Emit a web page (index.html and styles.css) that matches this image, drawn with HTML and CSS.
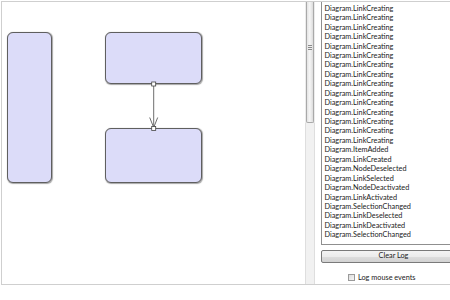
FILE: index.html
```html
<!DOCTYPE html>
<html>
<head>
<meta charset="utf-8">
<link rel="stylesheet" href="styles.css">
</head>
<body>
<div class="frame">
  <div class="diagram">
    <div class="node node-a"></div>
    <div class="node node-b"></div>
    <div class="node node-c"></div>
    <svg class="links" width="303" height="282" viewBox="0 0 303 282">
      <line x1="151.7" y1="84" x2="151.7" y2="126.5" stroke="#6e6e6e" stroke-width="1"/>
      <polyline points="147.7,115.5 151.7,125.5 155.7,115.5" fill="none" stroke="#6e6e6e" stroke-width="1"/>
      <rect x="149.7" y="80" width="4" height="4" fill="#fff" stroke="#444" stroke-width="0.8"/>
      <rect x="149.7" y="124.5" width="4" height="4" fill="#fff" stroke="#444" stroke-width="0.8"/>
    </svg>
  </div>
  <div class="scrollbar">
    <div class="thumb"><span class="grip"></span></div>
    <div class="track"></div>
  </div>
  <div class="panel">
    <div class="log">
      <div class="item">Diagram.LinkCreating</div>
      <div class="item">Diagram.LinkCreating</div>
      <div class="item">Diagram.LinkCreating</div>
      <div class="item">Diagram.LinkCreating</div>
      <div class="item">Diagram.LinkCreating</div>
      <div class="item">Diagram.LinkCreating</div>
      <div class="item">Diagram.LinkCreating</div>
      <div class="item">Diagram.LinkCreating</div>
      <div class="item">Diagram.LinkCreating</div>
      <div class="item">Diagram.LinkCreating</div>
      <div class="item">Diagram.LinkCreating</div>
      <div class="item">Diagram.LinkCreating</div>
      <div class="item">Diagram.LinkCreating</div>
      <div class="item">Diagram.LinkCreating</div>
      <div class="item">Diagram.LinkCreating</div>
      <div class="item">Diagram.LinkCreating</div>
      <div class="item">Diagram.ItemAdded</div>
      <div class="item">Diagram.LinkCreated</div>
      <div class="item">Diagram.NodeDeselected</div>
      <div class="item">Diagram.LinkSelected</div>
      <div class="item">Diagram.NodeDeactivated</div>
      <div class="item">Diagram.LinkActivated</div>
      <div class="item">Diagram.SelectionChanged</div>
      <div class="item">Diagram.LinkDeselected</div>
      <div class="item">Diagram.LinkDeactivated</div>
      <div class="item">Diagram.SelectionChanged</div>
    </div>
    <div class="button">Clear Log</div>
    <label class="check">
      <span class="box"></span>
      <span class="label">Log mouse events</span>
    </label>
  </div>
</div>
</body>
</html>
```
FILE: styles.css
```css
html, body {
  margin: 0;
  padding: 0;
  background: #ffffff;
}
body {
  width: 450px;
  height: 300px;
  overflow: hidden;
  font-family: "Lato", "Open Sans", sans-serif;
  font-size: 7.3px;
  color: #222222;
}
.frame {
  margin: 1px 0 0 1px;
  height: 282px;
  width: 520px;
  border-top: 1px solid #cfcfcf;
  border-left: 1px solid #cfcfcf;
  border-bottom: 1px solid #cfcfcf;
  display: flex;
}
.diagram {
  position: relative;
  width: 303px;
  flex: none;
  background: #ffffff;
}
.node {
  position: absolute;
  box-sizing: border-box;
  background: #dcdcf9;
  border: 1px solid #5f5f5f;
  border-radius: 6px;
  box-shadow: 0.5px 0.8px 1px rgba(0, 0, 0, 0.35);
}
.node-a { left: 5px; top: 30px; width: 45px; height: 151px; }
.node-b { left: 103px; top: 30px; width: 97px; height: 52px; }
.node-c { left: 103px; top: 126px; width: 97px; height: 54.5px; }
.links {
  position: absolute;
  left: 0;
  top: 0;
}
.scrollbar {
  width: 10px;
  flex: none;
  display: flex;
  flex-direction: column;
  background: #ececec;
}
.thumb {
  height: 121px;
  margin: 0 1px;
  box-sizing: border-box;
  border: 1px solid #a9a9a9;
  border-top: none;
  border-radius: 0 0 2px 2px;
  background: linear-gradient(to right, #e4e4e4, #f6f6f6 45%, #dcdcdc);
  display: flex;
  justify-content: center;
}
.grip {
  margin-top: 43px;
  width: 4px;
  height: 5px;
  background: repeating-linear-gradient(to bottom, #8a8a8a 0 1px, #eeeeee 1px 2px);
}
.track {
  flex: 1;
  border-left: 1px solid #dedede;
  border-right: 1px solid #dedede;
  background: #f1f1f1;
}
.panel {
  flex: none;
  width: 145px;
  padding-left: 6px;
  display: flex;
  flex-direction: column;
}
.log {
  height: 243px;
  box-sizing: border-box;
  border-left: 1px solid #8f8f8f;
  border-right: 1px solid #8f8f8f;
  border-bottom: 1px solid #8f8f8f;
  padding: 0 0 4.3px 2.5px;
  display: flex;
  flex-direction: column;
  justify-content: flex-end;
  overflow: hidden;
}
.item {
  line-height: 9.45px;
  height: 9.45px;
  white-space: nowrap;
  flex: none;
}
.button {
  margin-top: 5px;
  height: 12.5px;
  box-sizing: border-box;
  border: 1px solid #7a7a7a;
  border-radius: 2px;
  background: linear-gradient(to bottom, #f4f4f4 0%, #ececec 50%, #dedede 51%, #d2d2d2 100%);
  text-align: center;
  line-height: 10.5px;
  padding-right: 0;
}
.check {
  margin-top: 10.5px;
  margin-left: 27px;
  height: 8px;
  display: flex;
  align-items: center;
}
.box {
  width: 7px;
  height: 7px;
  box-sizing: border-box;
  border: 1px solid #9a9a9a;
  background: linear-gradient(135deg, #dcdcdc, #f6f6f6);
}
.label {
  margin-left: 3px;
  white-space: nowrap;
}
```
